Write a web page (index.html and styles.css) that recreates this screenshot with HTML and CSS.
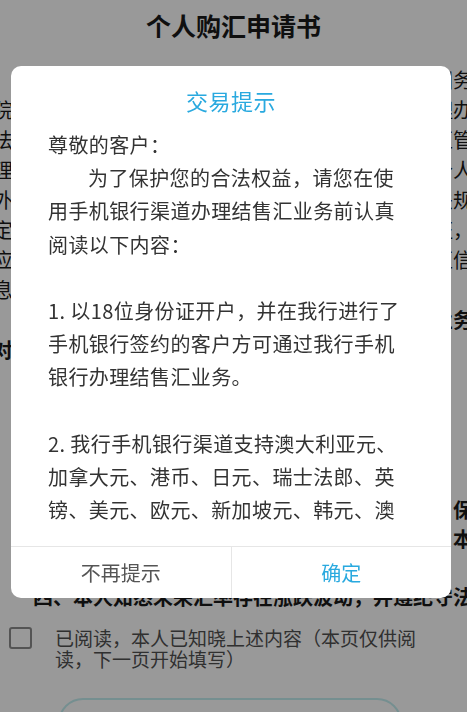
FILE: index.html
```html
<!DOCTYPE html>
<html lang="zh-CN">
<head>
    <meta charset="UTF-8">
    <meta name="viewport" content="width=device-width, initial-scale=1.0">
    <title>个人购汇申请书</title>
    <link rel="stylesheet" href="styles.css">
</head>
<body class="modal-open">
    <div class="page">
        <h1 class="page-title">个人购汇申请书</h1>
        <div class="notice">
            <p>为规范个人结售汇业务，根据外汇管理条例及国务院有关规定，现就我行目前所执行的《个人外汇管理办法》及《个人外汇管理办法实施细则》等相关的外汇管理规定说明如下：一、外汇局对个人结汇以及境内个人外汇实行年度总额管理，年度总额以内的应按照相关规定办理，超过年度总额的按照规定提供真实有效凭证，应如实申报购汇用途，不得虚假申报；二、个人购汇信息将纳入外汇局个人外汇业务监测系统。</p>
            <p class="tip">特别提示：以下行为均将被外汇局认定为违规业务<br>对于违规个人，外汇局将列入关注名单管理。</p>
        </div>
        <div class="pledge">
            <p>三、本人承诺所提供的购汇申报信息真实准确，保证所购外汇按申报用途使用，不用于境外购房等，本人已充分了解违反上述规定将承担的法律责任。</p>
            <p>四、本人知悉未来汇率存在涨跌波动，并遵纪守法。</p>
        </div>
        <label class="agree" for="agree">
            <input type="checkbox" id="agree">
            <span>已阅读，本人已知晓上述内容（本页仅供阅读，下一页开始填写）</span>
        </label>
        <button class="next-btn">下一步</button>
    </div>

    <div class="mask"></div>
    <div class="dialog">
        <h2 class="dialog-title">交易提示</h2>
        <div class="dialog-body">
            <p>尊敬的客户：</p>
            <p class="indent">为了保护您的合法权益，请您在使用手机银行渠道办理结售汇业务前认真阅读以下内容：</p>
            <p class="item">1. 以18位身份证开户，并在我行进行了手机银行签约的客户方可通过我行手机银行办理结售汇业务。</p>
            <p class="item">2. 我行手机银行渠道支持澳大利亚元、加拿大元、港币、日元、瑞士法郎、英镑、美元、欧元、新加坡元、韩元、澳门元等币种的结售汇业务。</p>
            <p class="item">3. 客户通过手机银行办理结售汇业务，须在我行营业时间内进行，交易金额不得超过年度便利化额度。</p>
        </div>
        <div class="dialog-foot">
            <button class="btn-skip">不再提示</button>
            <button class="btn-ok">确定</button>
        </div>
    </div>
</body>
</html>
```

FILE: styles.css
```css
* {
    box-sizing: border-box;
    margin: 0;
}
body {
    font-family: "Noto Sans CJK SC", sans-serif;
    color: #1a1a1a;
    background-color: #fff;
    overflow-x: hidden;
}
body.modal-open {
    overflow: hidden;
}

/* 申请书页面 */
.page-title {
    font-size: 25px;
    line-height: 50px;
    text-align: center;
    font-weight: bold;
}
.notice {
    width: 480px;
    margin-left: -7px;
    margin-top: 15px;
    font-size: 20px;
    line-height: 30px;
}
.notice p {
    text-indent: 2em;
}
.notice .tip {
    font-weight: bold;
}
.pledge {
    width: 460px;
    margin: 130px 0 0 33px;
    font-size: 20px;
    line-height: 29px;
    font-weight: bold;
}
.agree {
    display: flex;
    gap: 23px;
    margin-top: 16px;
    padding: 0 40px 0 9px;
    font-size: 19px;
    line-height: 21px;
    color: #505050;
}
.agree input {
    appearance: none;
    flex: none;
    width: 23px;
    height: 22px;
    margin: 0;
    border: 2px solid #8c8c8c;
    border-radius: 3px;
    background-color: #fff;
}
.next-btn {
    display: block;
    width: 344px;
    height: 50px;
    margin: 29px 0 0 58px;
    border: 2px solid #c4eef1;
    border-radius: 25px;
    background-color: #fff;
    font-family: inherit;
    font-size: 20px;
    color: #29a9df;
}

/* 弹窗 */
.mask {
    position: fixed;
    top: 0;
    left: 0;
    right: 0;
    bottom: 0;
    background-color: rgba(0, 0, 0, .4);
}
.dialog {
    position: fixed;
    top: 66px;
    left: 11px;
    width: 440px;
    background-color: #fff;
    border-radius: 10px;
    overflow: hidden;
}
.dialog-title {
    padding-top: 18px;
    font-size: 22px;
    line-height: 32px;
    font-weight: normal;
    letter-spacing: .5px;
    text-align: center;
    color: #29a9df;
}
.dialog-body {
    height: 416px;
    margin-bottom: 14px;
    padding: 12px 48px 0 37px;
    overflow: hidden;
    font-size: 20px;
    line-height: 1.66;
    letter-spacing: .4px;
    color: #333;
}
.dialog-body .indent {
    text-indent: 2em;
}
.dialog-body .item {
    margin-top: 1.66em;
}
.dialog-foot {
    display: flex;
    border-top: 1px solid #e6e6e6;
}
.dialog-foot button {
    flex: 1;
    height: 51px;
    border: 0;
    background: none;
    font-family: inherit;
    font-size: 20px;
    color: #555;
    cursor: pointer;
}
.dialog-foot .btn-ok {
    border-left: 1px solid #e6e6e6;
    color: #29a9df;
}
```
